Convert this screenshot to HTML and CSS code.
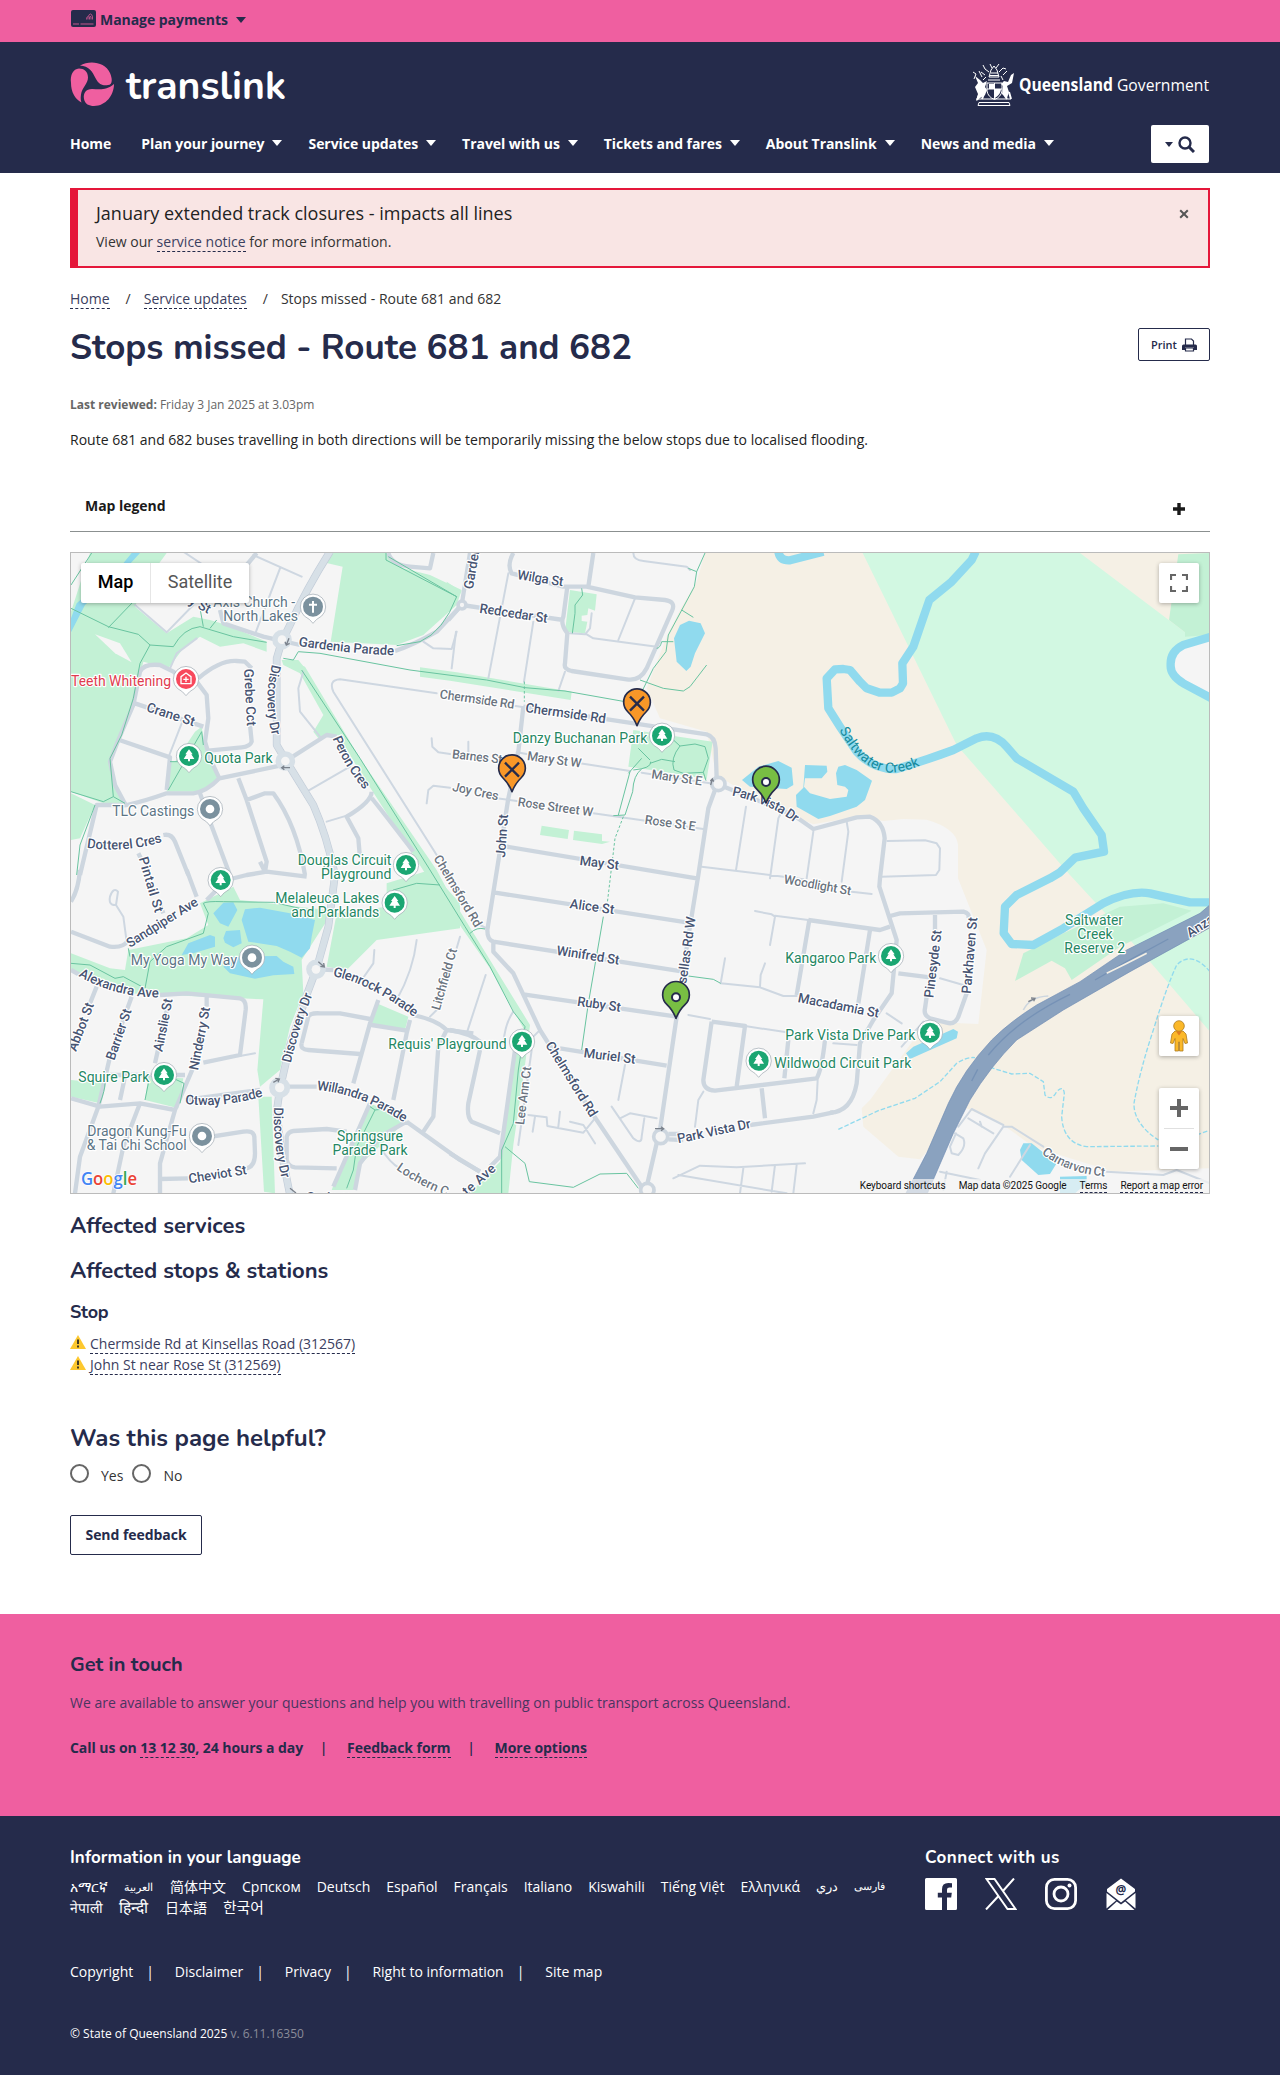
FILE: index.html
```html
<!DOCTYPE html>
<html lang="en">
<head>
<meta charset="utf-8">
<title>Stops missed - Route 681 and 682 | Translink</title>
<link rel="stylesheet" href="styles.css">
</head>
<body>
<div class="topbar">
  <div class="container topbar-inner">
    <svg class="card-icon" viewBox="0 0 25 17"><rect width="25" height="17" rx="2" fill="#252b4b"/><path d="M2 14h6M9.500 14h13" stroke="#ef5fa0" stroke-width=".8"/><path d="M15.500 9.500q0-2 1-3M17 9.500V7q1-3 2.500-3T21.500 7v2.500M18.500 9.500V7q.5-1.500 1.500 0v2.500" fill="none" stroke="#ef5fa0" stroke-width=".7"/></svg>
    <span>Manage payments</span><i class="caret"></i>
  </div>
</div>
<header class="header">
  <div class="container brand">
    <svg class="logo" viewBox="0 0 216 44" role="img" aria-label="translink">
      <g fill="#ef5fa0">
        <path d="M10 3.500C20-2 35 0 40 11c3 7 2 12-2 12-4 1-9 0-12-6C22 9 19 4 10 3.500z"/>
        <path d="M1 21C0 13 3 7 9 6.500c5 0 9 3 9 9 0 6-6 10-7 17-.6 4-.2 6 .5 8C5 37 1 30 1 21z"/>
        <path d="M14 37c-1-6 2-10 8-10 7 0 14 2 22-5C44 33 36 44 24 44c-5 0-9-2-10-7z"/>
      </g>
      <text x="56" y="36.500" textLength="160" lengthAdjust="spacingAndGlyphs">translink</text>
    </svg>
    <svg class="gov" viewBox="0 0 238 44" role="img" aria-label="Queensland Government">
      <g fill="none" stroke="#fff" stroke-width="1">
        <path d="M7 39.500h30l1 3H6zM5 36h34M15 20h15v8q-1 6-7.500 8.500Q16 34 15 28zM15 26h15M22.500 20v16M16 17h12M17 14l2-7 3-4 3 4 2 7z"/>
        <path d="M17 9l-4-3-2-4M27 9l4-4 3 1M13 12l-4-3M31 12l4-4M20 5l-2-4M24 5l3-4M19 10h7M18 12.500h9M2 16l2-5-3-2M10 14l-3-6M11 17l3-3M31 17l-2-4"/>
        <path d="M5 37l3-7M10 36l2-5M35 36l-4-6M39 36l-2-7" stroke-width="2"/>
      </g>
      <path fill="#fff" d="M3 13l5 4 3 3 4-2-2 6 2 3-2 5-5 3-4 3 2-7-3-7 3-4zM42 10l-2 10-5 3 2 6-2 6-5-4 1-8-2-2 3-3 4 1 3-7zM17 21h5v5h-5zM23 26h6q0 5-6 9z"/>
      <text x="47" y="28" textLength="190" lengthAdjust="spacingAndGlyphs"><tspan class="gov-bold">Queensland</tspan> Government</text>
    </svg>
  </div>
  <div class="container navrow">
    <nav class="nav">
      <a>Home</a><a>Plan your journey<i class="caret"></i></a><a>Service updates<i class="caret"></i></a><a>Travel with us<i class="caret"></i></a><a>Tickets and fares<i class="caret"></i></a><a>About Translink<i class="caret"></i></a><a>News and media<i class="caret"></i></a>
    </nav>
    <div class="search"><i class="caret"></i><svg viewBox="0 0 17 17" width="17" height="17"><circle cx="7" cy="7" r="5.500" fill="none" stroke="#252b4b" stroke-width="2.400"/><path d="M11 11l5 5" stroke="#252b4b" stroke-width="3"/></svg></div>
  </div>
</header>
<main class="container">
  <div class="alert">
    <div><div class="alert-title">January extended track closures - impacts all lines</div>
    <div class="alert-text">View our <a class="link">service notice</a> for more information.</div></div>
    <svg class="close" viewBox="0 0 10 10"><path d="M1.200 1.200l7.600 7.600M8.800 1.200l-7.600 7.600" stroke="#555" stroke-width="2"/></svg>
  </div>
  <div class="crumbs"><a class="link">Home</a><span>/</span><a class="link">Service updates</a><span>/</span><em>Stops missed - Route 681 and 682</em></div>
  <div class="titlerow">
    <h1>Stops missed - Route 681 and 682</h1>
    <div class="print">Print <svg viewBox="0 0 15 14" width="15" height="14"><path d="M3.500 7V1h6l2 2v4M3.500 10v3h8v-3z" fill="#fff" stroke="#252b4b" stroke-width="1.200"/><path d="M0 12V8q0-1.500 1.500-1.500h12Q15 6.500 15 8v4h-3V9.500H3V12z" fill="#252b4b"/></svg></div>
  </div>
  <p class="reviewed"><b>Last reviewed:</b> Friday 3 Jan 2025 at 3.03pm</p>
  <p class="intro">Route 681 and 682 buses travelling in both directions will be temporarily missing the below stops due to localised flooding.</p>
  <div class="legend"><span>Map legend</span><svg viewBox="0 0 12 12" width="12" height="12"><path d="M6 0v12M0 6h12" stroke="#1a1a1a" stroke-width="3.400"/></svg></div>

  <div class="map">
  <svg class="map-canvas" viewBox="33 24 3414 1920">
    <defs>
      <g id="drop"><path d="M0 50Q-8 38-26 28A38 38 0 1 1 26 28Q8 38 0 50z" fill="#fff" stroke="#9aa5ad" stroke-width="2"/></g>
      <g id="park"><use href="#drop"/><circle r="30" fill="#1ba672"/><path d="M0-20l11 15H7L16 9H3v7h-6V9h-13L-7-5h-4z" fill="#fff"/></g>
      <g id="dot"><use href="#drop"/><circle r="30" fill="#7b919e"/><circle r="13" fill="#fff"/></g>
      <g id="church"><use href="#drop"/><circle r="30" fill="#7b919e"/><path d="M0-17V18M-12-6H12" stroke="#fff" stroke-width="6"/></g>
      <g id="clinic"><use href="#drop"/><circle r="30" fill="#f8485c"/><path d="M-15 14V-7L0-18 15-7V14zM0-7V9M-8 1H8" stroke="#fff" stroke-width="4" fill="none"/></g>
      <g id="pin"><path d="M0 65Q-10 40-27 24A40 40 0 1 1 27 24Q10 40 0 65z" stroke="#252b4b" stroke-width="5" stroke-linejoin="round"/></g>
      <g id="missed"><use href="#pin" fill="#f89728"/><path d="M-21-22L21 20M21-22L-21 20" stroke="#252b4b" stroke-width="7"/></g>
      <g id="open"><use href="#pin" fill="#78be43"/><circle cy="2" r="12" fill="#fff" stroke="#252b4b" stroke-width="6"/></g>
      <path id="p1" d="M715 303Q860 325 1003 331"/><path id="p2" d="M636 358Q608 460 637 575"/><path id="p3" d="M818 580Q850 660 915 738"/>
      <path id="p4" d="M80 908Q200 925 308 890"/><path id="p5" d="M236 940Q253 1000 286 1108"/><path id="p6" d="M1120 940L1246 1150"/>
      <path id="p7" d="M845 752Q960 775 1035 834"/><path id="p8" d="M28 555Q90 675 180 683Q240 680 295 650"/>
      <path id="p9" d="M210 234Q310 170 420 102"/><path id="p10" d="M55 318Q160 380 300 383"/><path id="p11" d="M375 702Q490 715 612 678"/>
      <path id="p12" d="M692 580Q718 470 759 370"/><path id="p13" d="M642 712Q638 820 665 928"/><path id="p14" d="M818 318Q930 340 1066 444"/>
      <path id="p15" d="M770 660Q900 670 1036 760"/><path id="p16" d="M1008 898Q1080 950 1165 980"/><path id="p17" d="M635 850Q710 912 835 920"/>
    </defs>
    <rect x="33" y="24" width="3414" height="1920" fill="#f5f5f5"/>
    <g class="sand"><path d="M1935 24L1910 110 1860 195 1822 270 1760 430 1800 520 1940 560 1970 690 2100 770 2260 838 2390 815 2470 828 2530 822 2600 824Q2690 850 2694 900V1000L2780 1215 2755 1437 2600 1430 2430 1665 2405 1690 2410 1745 2515 1835 2580 1843 2720 1690 2830 1740 2920 1805 3160 1880 3450 1870V24z"/></g>
    <path class="reserve" d="M2408 24L2690 600 3030 990 3270 1250 3450 1460V262H3375L3060 24z"/>
    <path class="land" d="M3450 280L3370 300 3330 350 3360 410 3450 450z"/>
    <g class="green">
      <path d="M33 200L90 24H320L250 120 225 185 320 265 400 215 450 225 500 240 620 290V320L550 295 480 305 420 275 370 310 325 370 250 350 225 460 185 570 155 640 160 700 195 775H130L33 740z"/>
      <path d="M33 745L105 780 60 880 33 885zM810 24H978L1030 70 1110 90 1205 135 1190 180 1090 270 1010 300 812 290 848 65 790 52zM665 345L715 345 735 370 840 570 775 580 760 560 790 510 720 385 670 360zM405 560L425 545 435 610 475 700 420 740H320L325 650 345 650zM1080 367L1190 382 1535 440 1532 465 1170 407 1080 395z"/>
      <path d="M700 350L735 365 900 640 1130 975 1170 1050 1410 1440 1395 1560 1360 1800 1345 1945H1230L1320 1850 1365 1530 1390 1450 1290 1270 1150 1070 900 680z"/>
      <path d="M3355 28L3448 24V270L3375 275 3375 262 3327 225z"/>
      <g transform="translate(1170)"><path d="M-10 110L35 140-5 190zM360 135L440 148 435 197 415 190 412 210 395 212V228L412 230 405 265 345 260zM550 555L788 590 770 702 640 680 535 665zM275 842L357 855 353 882 270 870zM372 857L456 868V888L480 890 456 897 369 885z"/></g>
      <g transform="translate(0 975)"><path d="M420 100L520 50 540 90 800 120 815 130 725 270 730 370 690 470 660 600 600 650 592 600 610 388 540 385 200 370 33 300V250L150 295 195 300 205 240 380 205 445 165zM980 40L1110 0 1200 100V175L950 210 860 300 800 290 830 130 980 110zM595 680H635L645 970 612 965zM33 630L135 640 120 700 33 680zM265 620L370 625 355 715 255 690zM930 700L1040 750 1000 790 905 880 880 960H815L870 820zM950 400L1045 440 1035 480 935 462z"/></g>
      <path transform="translate(2310 975)" d="M555 333L580 250 700 190 870 110 1000 100 1085 122 870 230 725 330 705 295 665 272z"/>
    </g>
    <path class="land" d="M105 268L180 295 215 352 165 325z"/>
    <g class="water">
      <path d="M33 220L50 175 190 55 215 24H240L205 62 75 180 33 262z"/>
      <path transform="translate(1170)" d="M690 240L717 227 752 235 765 265 735 325 722 365 709 378 680 350 672 280zM876 705L925 665 985 648 1025 668 1030 720 1010 732 900 725zM1065 660L1130 662 1132 680 1115 700H1065L1062 725 1080 745 1140 762 1190 755 1195 735 1185 725 1162 720 1158 685 1165 665 1185 660 1220 675 1266 707 1245 765 1220 785 1140 813 1105 822 1040 785 1038 750 1060 728z"/>
      <path transform="translate(0 975)" d="M460 130L490 98 520 97 532 120 505 170 480 160zM545 150L555 118 600 113 690 130 765 150 755 200 750 235 725 263 690 245 650 228 565 215zM365 255L385 220 450 195 465 200V230L400 250zM490 205L498 183 540 180 545 220 520 232 495 218zM520 260L650 258 670 275 700 290 703 312 640 316 585 326 510 310 490 290z"/>
      <path transform="translate(2310 975)" d="M228 550L250 530 370 477 384 485 380 505 240 567zM570 840L580 820 605 820 680 880 660 912 625 915 575 870zM690 920L770 918V940L735 970H690z"/>
    </g>
    <g class="river">
      <path transform="translate(2310)" d="M437 20L425 45 365 110 298 165 250 305 217 355 219 415 210 430 185 443H150L110 430 90 410 60 375 40 372 15 373-10 400-5 490 30 545 80 620Q130 675 200 672 290 645 370 615L440 580Q490 560 530 605L560 640 730 740 760 790 815 870 822 920 735 938 690 982 660 1000 560 1050 525 1085 521 1165 545 1197 610 1200 700 1150 820 1075Q900 1035 960 1045L1080 1072H1140M1145 275L1060 300Q1020 320 1022 360 1020 390 1060 415L1145 460"/>
      <path transform="translate(1170)" d="M985 20Q990 48 1020 46L1120 20"/>
    </g>
    <g class="stream"><path transform="translate(2310 975)" d="M25 778L145 722 255 685 330 635 380 580Q410 560 435 563M480 592L545 612 600 610 640 635 645 675Q665 695 680 665 700 645 703 670L695 740Q700 820 770 830L985 828M1140 305Q1085 240 1040 285 1010 350 970 480 930 600 912 700 910 760 985 810M1100 795l40-15"/></g>
    <g class="minor">
      <path d="M580 30L725 95M660 70L588 260M225 180L320 262 400 180M330 370L350 325 410 280M1090 290L1120 310 1175 312 1190 260M1130 445L840 403Q805 405 820 440L1130 930M780 575L720 500 715 430 730 380M740 740L870 665M365 535L328 630M800 830L860 812M1115 580L1117 605 1135 622 1170 627M1100 775L1105 735 1120 722 1170 728M370 20l60 40"/>
      <path transform="translate(1170)" d="M175 85L115 400M250 230L222 410M345 380L325 438M555 160L505 285M425 205L420 250 405 268 360 265M410 268L430 280 620 305M550 24Q550 45 580 48L710 65 720 75M200 622L230 627M390 655L540 678M575 683L780 715M140 760L200 768M430 805L760 852M5 370L18 260M55 590V625M888 785L858 975M995 800L985 820 960 1000M1090 860L1070 1000M755 965L880 980 1060 1003M192 482L222 487"/>
      <path transform="translate(2310)" d="M50 830L55 860 35 1010M172 888L285 886 320 895 330 910 328 975 318 990 155 995M65 1040L125 1047"/>
      <path transform="translate(1170 975)" d="M915 123L965 133 975 140 960 225M975 137L1075 150M825 265L812 340 930 352 1000 378H1040M945 280L932 315 930 350M715 435L780 447M885 468L1010 487M760 665L745 690 735 770M1103 630L1100 690 1090 730M485 710L550 805Q575 825 575 800L583 745M510 745L540 730 620 745M670 925L750 887 860 892 1065 880M685 915L1010 970M880 895L870 970M975 885L965 965M1040 885L1030 970M525 585L505 690M235 735L290 742 292 768 400 788 435 745M330 725L325 770M255 740L248 785M360 755l40 10L435 820M245 540L205 825M107 315L50 490M190 425Q165 460 160 520M265 485L250 500M90 165L110 175"/>
      <path transform="translate(0 975)" d="M540 558L585 550M943 240L940 280 905 330M1070 210Q1060 300 1010 390M1200 200L1190 235M1130 420L1110 440M960 830Q990 880 1020 895M165 105Q145 105 150 80 160 50 174 65L168 105 190 140 200 215"/>
      <path transform="translate(2310 975)" d="M375 790L400 805Q410 830 385 855L365 850 360 830 378 790M385 770L425 717 520 765M415 745L490 790M450 755l5 15M330 905L450 930M350 905L340 960M520 770H545L640 830M520 770L465 850 445 895M600 825L540 920M830 905L1000 915 1040 900 1140 940M330 325L400 345M170 430L215 460M280 455L215 530M10 520L80 525"/>
    </g>
    <g class="major">
      <path d="M200 785L165 720 150 650 175 585 220 480 240 380Q250 355 300 360L340 380 365 400M410 410L440 450 445 520 435 590 450 640 478 700Q440 740 400 745H320Q250 770 200 780L110 780 60 990M415 400Q480 345 530 348L555 350 575 370M570 540L575 590Q570 605 545 607L445 617M225 475L430 545M178 585L330 637 320 735M478 700L660 662M690 640L800 570 830 575M480 195L490 235 610 275 720 300M1005 318Q1060 300 1130 260L1205 180M420 745L450 830 510 990M535 700L560 765 620 950 615 980M560 765L615 745H640Q710 840 735 990M935 740Q935 770 860 815L895 880 900 940M935 760Q945 770 1060 920M310 870Q335 865 345 890L385 990M235 925L245 945M560 60L590 24"/>
      <path transform="translate(1170)" d="M190 24Q170 60 185 85L340 125H410L555 157 645 165Q680 170 665 200L590 370Q570 410 530 403L365 378Q340 372 345 355L352 265Q330 235 340 215L352 125M430 24L415 125M35 180L340 225M60 24L35 180-5 225M-185 24Q-175 60-120 65L-60 70-50 24M220 485L770 568Q795 575 797 610L800 700M815 722L1030 810 1090 852 1220 817 1260 815Q1300 830 1304 880L1290 1000 1288 1025 1340 1185 1325 1345 1270 1425 1230 1495 1220 1615Q1205 1700 1140 1703M795 735L775 790 745 990 715 1175 680 1415 630 1755M220 485L205 620 175 760 112 1155Q112 1185 130 1190V1220L190 1285 270 1455 430 1710 585 1940M170 905L740 1000M135 1043L710 1132M130 1190L700 1280M220 1348L680 1415M330 1510L650 1562"/>
      <path transform="translate(1170 975)" d="M1075 150L1290 180 1320 170M1078 150L1040 375M785 455L760 630Q760 660 795 662L1100 625Q1115 600 1125 510M785 455L885 468 860 650M1015 510L1003 625M935 655L945 745M655 792H690M655 808L700 810M900 765L1090 740 1150 727M620 820L590 950M0 480Q60 490 90 515M90 540L55 700Q50 740 65 755L150 790M195 540L160 790 150 860 120 890M0 850L90 905"/>
      <path transform="translate(0 975)" d="M33 300L60 315M300 375L380 370 540 385Q560 390 557 420L540 555 430 578M440 375V410M405 580L375 650 345 720 300 880V970M110 350L90 400M215 380L150 560 115 710 60 860 45 970M325 400L285 580M150 615L375 615M195 620L180 690M33 685L120 710 240 700 345 720M240 700L190 830 160 970M300 927L385 925M560 895Q585 890 585 850L583 800Q580 780 550 785L390 810M600 660L375 690M770 298L820 300M1060 435Q1130 450 1160 480L1240 490M955 390L930 460 880 640M725 520L745 440Q750 428 780 430H840L930 447M725 520Q720 538 745 540L900 552M935 465L1040 482M1050 450L1040 490 1000 690M650 650H770M1040 755L1200 870 1260 905M1160 480L1135 530 1120 740 1090 785M930 700L820 950M1040 755L960 800 900 880 885 960M680 870V800Q685 785 700 783L800 777 860 785M680 870Q685 890 705 892L830 895M33 185L150 230Q190 235 205 210M380 0L410 80M440 90L500 30 560 15 620 5 740 20M615 5l-15-30M60 0Q55 60 33 95M295 90L310 130"/>
      <path transform="translate(2310 975)" d="M180 138L210 130 400 125Q420 130 415 145M315 135V180M410 370L385 440Q375 465 350 458L300 445Q280 435 285 415L290 380M205 310L300 322M120 180L85 400"/>
    </g>
    <g class="arterial-edge"><path d="M810 20Q740 130 690 240L665 290 650 340 650 600 680 650 760 780Q800 870 825 990L805 1145 770 1270 740 1350 690 1500 660 1630 650 1700 665 1825 690 1950"/></g>
    <g class="arterial"><path d="M810 20Q740 130 690 240L665 290 650 340 650 600 680 650 760 780Q800 870 825 990L805 1145 770 1270 740 1350 690 1500 660 1630 650 1700 665 1825 690 1950"/><circle cx="666" cy="284" r="20"/><circle cx="676" cy="648" r="20"/><circle cx="768" cy="1273" r="20"/><circle cx="659" cy="1628" r="22"/></g>
    <g fill="#f5f5f5"><circle cx="666" cy="284" r="13"/><circle cx="676" cy="648" r="13"/><circle cx="768" cy="1273" r="13"/><circle cx="659" cy="1628" r="14"/></g>
    <g class="ring"><circle cx="1975" cy="717" r="20"/><circle cx="1802" cy="1775" r="21"/><circle cx="1206" cy="180" r="12"/><circle cx="1762" cy="1935" r="20"/></g>
    <g class="path">
      <path d="M33 190L145 245 235 268 270 300 340 305Q370 250 420 245L520 275 620 292M270 300L240 355 220 460 185 570 150 640 160 755 130 770 33 740M145 248L220 170M33 120L95 24M670 340L700 345 715 320 780 325 1050 375 1280 405 1395 428 1515 438 1695 470M725 375L900 640 1110 975 1215 1145 1290 1265 1360 1400 1395 1445 1375 1575 1360 1735 1325 1815V1945M325 735L425 560 430 600M978 24V45L1190 155Q1150 260 1080 290L1010 302M985 35L1190 155M160 755L195 775M105 780L60 900 50 990M420 190l10 55M470 225l-20 25M330 650h50M1335 1805L1395 1855 1408 1910 1540 1927 1620 1887 1700 1885 1735 1930M1630 1115L1585 1375 1565 1515M1885 1293L1960 1303 1982 1315M1230 1165Q1250 1145 1275 1152"/>
      <path transform="translate(1170)" d="M765 24L740 80 733 125 655 270 648 320 610 370 578 435M570 405L640 430 700 438 720 425 770 360M695 195l35 22M635 290h35M715 70l25 10M620 310q10 0 15-20M395 130L398 150 375 180V205L367 265M540 680L505 810M535 685L575 640 M600 645L565 610M550 675Q605 670 602 650M600 655L635 643 675 650M690 603Q660 640 672 675L700 685 760 682 775 640 765 605 735 597 690 603 665 580M575 672Q550 690 548 740L525 810 490 812M760 682l8 25"/>
      <path transform="translate(0 975)" d="M33 280L90 285 165 325 190 320 255 355 270 275 320 230 430 190 445 130 430 100Q440 93 490 95L640 97 740 120M205 235l5 25M120 700Q135 660 135 640M255 690L265 640M360 700L372 640 340 625M930 710L945 720 890 830 880 900 860 955M945 720L990 715M980 80L1000 60 1070 40 1140 45"/>
      <path class="dash" d="M1393 410V470M1690 815L1665 880 1640 1090"/>
    </g>
    <g transform="translate(2310 975)"><path fill="#8aa2bf" stroke="#6f8db4" stroke-width="2" d="M225 975L290 850 355 700Q400 600 485 510 540 455 620 405L750 335 890 240 1110 130 1145 100V170L900 305 700 420 560 510Q480 590 420 690L370 790 290 975z"/><path d="M475 555Q560 450 720 373M795 330L890 275 1015 207M425 633l18-35" fill="none" stroke="#7692b6" stroke-width="4"/><path d="M830 310l55-27 65-33" stroke="#f5f0e5" stroke-width="5" fill="none"/><path d="M580 420Q600 380 655 378" fill="none" stroke="#cdd6df" stroke-width="5"/></g>
    <g class="arrow"><path d="M687 280l-8 20m-4-10l4 10 10-5M690 668h-25m8-6l-8 6 8 6M775 1250l18 16m-2-12l2 12-12-2M640 1612l18-10m-12-2l12 2-4 10M1785 1751h26m-8-6l8 6-8 6M1952 720l5-18m-6 6l6-6 4 8M2905 1370l20-10m-12-1l12 1-4 9M690 1930l18 14"/></g>

    <g class="lbl street">
      <text><textPath href="#p1" textLength="288">Gardenia Parade</textPath></text>
      <text transform="translate(257 498) rotate(18)" textLength="150">Crane St</text>
      <text transform="translate(552 372) rotate(87)" textLength="172">Grebe Cct</text>
      <text><textPath href="#p2" textLength="216">Discovery Dr</textPath></text>
      <text><textPath href="#p3" textLength="182">Peron Cres</textPath></text>
      <text><textPath href="#p4" textLength="230">Dotterel Cres</textPath></text>
      <text><textPath href="#p5" textLength="172">Pintail St</textPath></text>
      <text transform="translate(372 168) rotate(28)">ry St</text>
      <g transform="translate(1170)">
        <text transform="translate(68 134) rotate(-80)">Garden</text>
        <text transform="translate(200 102) rotate(9)" textLength="140">Wilga St</text>
        <text transform="translate(87 203) rotate(8.500)" textLength="206">Redcedar St</text>
        <text transform="translate(225 501) rotate(8)" textLength="243">Chermside Rd</text>
        <text transform="translate(165 938) rotate(-86)" textLength="130">John St</text>
        <text transform="translate(388 960) rotate(7)" textLength="118">May St</text>
        <text><textPath href="#p7" textLength="208">Park Vista Dr</textPath></text>
      </g>
      <g transform="translate(0 975)">
        <text><textPath href="#p9" textLength="245">Sandpiper Ave</textPath></text>
        <text><textPath href="#p10" textLength="252">Alexandra Ave</textPath></text>
        <text transform="translate(48 546) rotate(-69)" textLength="152">Abbot St</text>
        <text transform="translate(163 573) rotate(-71)" textLength="160">Barrier St</text>
        <text transform="translate(307 547) rotate(-79)" textLength="162">Ainslie St</text>
        <text transform="translate(414 602) rotate(-79)" textLength="192">Ninderry St</text>
        <text><textPath href="#p11" textLength="237">Otway Parade</textPath></text>
        <text><textPath href="#p12" textLength="216">Discovery Dr</textPath></text>
        <text><textPath href="#p13" textLength="216">Discovery Dr</textPath></text>
        <text transform="translate(388 940) rotate(-9)" textLength="176">Cheviot St</text>
        <text><textPath href="#p14" textLength="276">Glenrock Parade</textPath></text>
        <text><textPath href="#p15" textLength="282">Willandra Parade</textPath></text>
        <text x="740" y="992">Springs</text>
      </g>
      <g transform="translate(1170 975)">
        <text transform="translate(358 114) rotate(8)" textLength="134">Alice St</text>
        <text transform="translate(318 254) rotate(9)" textLength="190">Winifred St</text>
        <text transform="translate(380 407) rotate(8)" textLength="132">Ruby St</text>
        <text transform="translate(400 562) rotate(7)" textLength="156">Muriel St</text>
        <text transform="translate(709 342) rotate(-82)" textLength="202">sellas Rd W</text>
        <text transform="translate(285 525) rotate(58)" textLength="258">Chelmsford Rd</text>
        <text transform="translate(685 820) rotate(-12)" textLength="224">Park Vista Dr</text>
        <text transform="translate(52 978) rotate(-42)" textLength="118">te Ave</text>
        <text transform="translate(1042 396) rotate(11)" textLength="247">Macadamia St</text>
      </g>
      <g transform="translate(2310 975)">
        <text transform="translate(310 385) rotate(-83)" textLength="205">Pinesyde St</text>
        <text transform="translate(422 372) rotate(-85)" textLength="230">Parkhaven St</text>
        <text transform="translate(1080 203) rotate(-32)">Anzac</text>
      </g>
    </g>
    <g class="lbl lane">
      <text><textPath href="#p6" textLength="244">Chelmsford Rd</textPath></text>
      <text transform="translate(1138 460) rotate(8)" textLength="226">Chermside Rd</text>
      <g transform="translate(1170)">
        <text transform="translate(5 640) rotate(6)" textLength="152">Barnes St</text>
        <text transform="translate(230 645) rotate(8)" textLength="164">Mary St W</text>
        <text transform="translate(603 700) rotate(8)" textLength="153">Mary St E</text>
        <text transform="translate(5 737) rotate(12)" textLength="141">Joy Cres</text>
        <text transform="translate(202 783) rotate(8)" textLength="228">Rose Street W</text>
        <text transform="translate(583 836) rotate(8)" textLength="154">Rose St E</text>
      </g>
      <g transform="translate(1170 975)">
        <text transform="translate(222 766) rotate(-83)" textLength="176">Lee Ann Ct</text>
        <text transform="translate(1000 40) rotate(10)" textLength="204">Woodlight St</text>
        <text transform="translate(-31 422) rotate(-74)" textLength="190">Litchfield Ct</text>
      </g>
      <text transform="translate(0 975)"><textPath href="#p16">Lochern Ct</textPath></text>
      <text transform="translate(2310 975)"><textPath href="#p17" textLength="205">Carnarvon Ct</textPath></text>
    </g>
    <text class="creek" transform="translate(2310)"><textPath href="#p8" textLength="300">Saltwater Creek</textPath></text>
    <g class="lbl place">
      <text x="433" y="654" textLength="205">Quota Park</text>
      <text x="994" y="960" text-anchor="end" textLength="281">Douglas Circuit</text>
      <text x="994" y="1002" text-anchor="end" textLength="211">Playground</text>
      <text x="1358" y="594" textLength="404">Danzy Buchanan Park</text>
      <text x="958" y="1074" text-anchor="end" textLength="312">Melaleuca Lakes</text>
      <text x="958" y="1116" text-anchor="end" textLength="264">and Parklands</text>
      <text x="55" y="1611" textLength="213">Squire Park</text>
      <text x="930" y="1788" text-anchor="middle" textLength="198">Springsure</text>
      <text x="930" y="1830" text-anchor="middle" textLength="225">Parade Park</text>
      <text x="1340" y="1513" text-anchor="end" textLength="355">Requis' Playground</text>
      <text x="2176" y="1254" textLength="273">Kangaroo Park</text>
      <text x="2176" y="1485" textLength="390">Park Vista Drive Park</text>
      <text x="2143" y="1569" textLength="411">Wildwood Circuit Park</text>
      <text x="3102" y="1140" text-anchor="middle" textLength="174">Saltwater</text>
      <text x="3105" y="1182" text-anchor="middle" textLength="106">Creek</text>
      <text x="3104" y="1224" text-anchor="middle" textLength="182">Reserve 2</text>
    </g>
    <g class="lbl business">
      <text x="460" y="187" textLength="245">Axis Church -</text>
      <text x="490" y="228" textLength="224">North Lakes</text>
      <text x="157" y="813" textLength="246">TLC Castings</text>
      <text x="212" y="1260" textLength="319">My Yoga My Way</text>
      <text x="380" y="1773" text-anchor="end" textLength="298">Dragon Kung-Fu</text>
      <text x="380" y="1815" text-anchor="end" textLength="300">&amp; Tai Chi School</text>
      <text class="health" x="33" y="423" textLength="300">Teeth Whitening</text>
    </g>
    <use href="#park" x="387" y="633"/><use href="#church" x="759" y="185"/><use href="#clinic" x="378" y="402"/><use href="#dot" x="450" y="792"/>
    <use href="#park" x="1038" y="960"/><use href="#park" x="1806" y="572"/><use href="#park" x="482" y="1005"/><use href="#park" x="1004" y="1073"/>
    <use href="#dot" x="576" y="1238"/><use href="#park" x="312" y="1590"/><use href="#dot" x="426" y="1773"/><use href="#park" x="1386" y="1490"/>
    <use href="#park" x="2096" y="1547"/><use href="#park" x="2493" y="1233"/><use href="#park" x="2610" y="1463"/>
    <use href="#missed" x="1731" y="477"/><use href="#missed" x="1356" y="675"/><use href="#open" x="2118" y="709"/><use href="#open" x="1848" y="1355"/>
    <text class="google" x="63" y="1920" textLength="168" lengthAdjust="spacingAndGlyphs"><tspan fill="#4285f4">G</tspan><tspan fill="#ea4335">o</tspan><tspan fill="#fbbc04">o</tspan><tspan fill="#4285f4">g</tspan><tspan fill="#34a853">l</tspan><tspan fill="#ea4335">e</tspan></text>
  </svg>
    <div class="ctl types"><b>Map</b><span>Satellite</span></div>
    <div class="ctl full"><svg viewBox="0 0 18 18" width="18" height="18"><path d="M1 6V1h5M12 1h5v5M17 12v5h-5M6 17H1v-5" fill="none" stroke="#666" stroke-width="2.200"/></svg></div>
    <div class="ctl peg"><svg viewBox="0 0 18 32" width="18" height="32"><path d="M5 11h8l3 3 1.500 9-2.500.5-2-5V31H9.500v-9h-1v9H5V18.500l-2 5-2.500-.5L2 14z" fill="#fbb829" stroke="#ad7b1f" stroke-width=".8"/><circle cx="9" cy="6" r="5.300" fill="#fbb829" stroke="#ad7b1f" stroke-width=".8"/><path d="M6 11.500h6l-3 4z" fill="#e07b1f"/></svg></div>
    <div class="ctl zoom"><svg viewBox="0 0 18 18" width="18" height="18"><path d="M9 0v18M0 9h18" stroke="#666" stroke-width="4"/></svg><i></i><svg viewBox="0 0 18 18" width="18" height="18"><path d="M0 9h18" stroke="#666" stroke-width="4"/></svg></div>
    <div class="credits"><span>Keyboard shortcuts</span><span>Map data ©2025 Google</span><a>Terms</a><a>Report a map error</a></div>
  </div>

  <h2>Affected services</h2>
  <h2 class="second">Affected stops &amp; stations</h2>
  <h3>Stop</h3>
  <ul class="stops">
    <li><svg viewBox="0 0 16 14"><path d="M8 0l8 14H0z" fill="#fdc82f"/><path d="M8 4.500v4.500M8 10.500v2" stroke="#222" stroke-width="1.700"/></svg><a class="link">Chermside Rd at Kinsellas Road (312567)</a></li>
    <li><svg viewBox="0 0 16 14"><path d="M8 0l8 14H0z" fill="#fdc82f"/><path d="M8 4.500v4.500M8 10.500v2" stroke="#222" stroke-width="1.700"/></svg><a class="link">John St near Rose St (312569)</a></li>
  </ul>
  <h2 class="helpful">Was this page helpful?</h2>
  <div class="radios"><i></i><span>Yes</span><i></i><span>No</span></div>
  <div class="send">Send feedback</div>
</main>
<section class="touch">
  <div class="container">
    <h4>Get in touch</h4>
    <p>We are available to answer your questions and help you with travelling on public transport across Queensland.</p>
    <div class="contact"><span>Call us on <a class="link">13 12 30</a>, 24 hours a day</span><em>|</em><a class="link">Feedback form</a><em>|</em><a class="link">More options</a></div>
  </div>
</section>
<footer class="footer">
  <div class="container">
    <div class="cols">
      <div class="langs-col">
        <h5 class="info">Information in your language</h5>
        <div class="langs"><span class="am">አማርኛ</span><span class="ar">العربية</span><span class="zh">简体中文</span><span>Српском</span><span>Deutsch</span><span>Español</span><span>Français</span><span>Italiano</span><span>Kiswahili</span><span>Tiếng Việt</span><span>Ελληνικά</span><span class="dr">دري</span><span class="fa">فارسی</span></div>
        <div class="langs"><span class="ne">नेपाली</span><span class="hi">हिन्दी</span><span class="ja">日本語</span><span class="ko">한국어</span></div>
      </div>
      <div>
        <h5 class="connect">Connect with us</h5>
        <div class="social">
          <svg viewBox="0 0 32 32"><path fill="#fff" fill-rule="evenodd" d="M1.500 0h29Q32 0 32 1.500v29Q32 32 30.500 32H22V19.600h4.200l.6-4.800H22v-3q0-2.400 2.400-2.400H27V5.200Q25.500 5 23.300 5 17 5 17 11.300v3.500h-4.200v4.800H17V32H1.500Q0 32 0 30.500v-29Q0 0 1.500 0z"/></svg>
          <svg viewBox="0 0 32 32"><path d="M1.500 1h8l21 30h-8zM29 .5L17.500 13.500M13.500 18L1 31.500" fill="none" stroke="#fff" stroke-width="2"/></svg>
          <svg viewBox="0 0 32 32"><g fill="none" stroke="#fff" stroke-width="2.800"><rect x="1.400" y="1.400" width="29.200" height="29.200" rx="8"/><circle cx="16" cy="16" r="7"/></g><circle cx="24.500" cy="7.500" r="2" fill="#fff"/></svg>
          <svg viewBox="0 0 32 32"><path fill="#fff" d="M2 11L16 .5 30 11V13.500L16 24.500 2 13.500zM1.500 15v15.500l9.500-8zM30.500 15v15.500l-9.500-8zM2.500 32h27l-9.300-8.500-4.200 3-4.200-3z"/><text x="16" y="16" text-anchor="middle" class="at">@</text></svg>
        </div>
      </div>
    </div>
    <div class="flinks"><a>Copyright</a><em>|</em><a>Disclaimer</a><em>|</em><a>Privacy</a><em>|</em><a>Right to information</a><em>|</em><a>Site map</a></div>
    <div class="copy">© State of Queensland 2025 <span>v. 6.11.16350</span></div>
  </div>
</footer>
</body>
</html>
```
FILE: styles.css
```css
* { box-sizing: border-box; }
body { margin: 0; background: #fff; color: #333; font: 14px/21px "Open Sans", "Noto Sans CJK SC", sans-serif; }
h1, h2, h3, h4, h5, p, ul { margin: 0; padding: 0; }
em { font-style: normal; }
.container { width: 1140px; margin: 0 auto; }
.caret { display: inline-block; border: 5px solid transparent; border-top: 6px solid; border-bottom: 0; margin-left: 8px; flex: none; }
.link { color: #3b4060; border-bottom: 1px dashed #252b4b; }

.topbar { height: 42px; background: #ef5fa0; color: #252b4b; font-weight: 700; letter-spacing: -.05px; }
.topbar-inner { display: flex; align-items: center; height: 39px; padding-left: 1px; }
.card-icon { width: 25px; height: 17px; margin: -2px 4px 0 0; }

.header { height: 131px; background: #252b4b; color: #fff; }
.brand { display: flex; justify-content: space-between; padding-top: 20px; }
.logo { width: 216px; height: 44px; }
.logo text { font: 700 40px Nunito, Lato, sans-serif; fill: #fff; }
.gov { width: 238px; height: 44px; margin-top: 1px; }
.gov text { font: 400 17px "Open Sans", sans-serif; fill: #fff; }
.gov .gov-bold { font-weight: 700; }
.navrow { display: flex; justify-content: space-between; padding-top: 18px; }
.nav { display: flex; gap: 26px; align-items: center; height: 36px; font-weight: 700; letter-spacing: -.05px; }
.nav a { display: flex; align-items: center; white-space: nowrap; }
.nav a:first-child { margin-right: 4px; }
.search { width: 58px; height: 38px; background: #fff; border-radius: 2px; color: #252b4b; display: flex; align-items: center; justify-content: center; gap: 5px; margin-right: 1px; }
.search .caret { margin: 0; border-width: 5px 4px 0; }

.alert { margin-top: 15px; height: 80px; border: 2px solid #e5173a; border-left-width: 8px; background: #f9e5e4; padding: 11px 19px 0 18px; display: flex; justify-content: space-between; }
.alert-title { font-size: 18px; line-height: 25px; color: #222; }
.alert-text { margin-top: 5px; color: #333; }
.close { width: 10px; height: 10px; margin-top: 8px; }
.crumbs { margin-top: 20px; display: flex; color: #333; height: 21px; }
.crumbs span { margin: 0 13px 0 16px; }
.crumbs a { height: 21px; }
.titlerow { display: flex; justify-content: space-between; margin-top: 19px; height: 76px; }
h1, h2, h3, h4, h5 { font-family: Nunito, "Open Sans", sans-serif; color: #252b4b; font-weight: 700; white-space: nowrap; }
h1 { font-size: 35px; line-height: 40px; }
.print { width: 72px; height: 33px; border: 1px solid #252b4b; border-radius: 2px; display: flex; align-items: center; justify-content: center; gap: 5px; font-size: 11px; font-weight: 600; color: #252b4b; }
.reviewed { font-size: 12px; line-height: 18px; margin-top: -8px; color: #666; }
.intro { margin-top: 15px; color: #222; }
.legend { margin-top: 45px; height: 37px; padding: 0 25px 0 15px; display: flex; justify-content: space-between; border-bottom: 1px solid #8b9090; font-weight: 700; letter-spacing: -.05px; color: #1a1a1a; }
.legend svg { margin-top: 8px; }

.map { position: relative; margin-top: 20px; height: 642px; border: 1px solid #bbb; overflow: hidden; font-family: Roboto, sans-serif; }
.map-canvas { display: block; width: 1138px; height: 640px; }
.sand { fill: #f5f0e5; } .reserve { fill: #d2f8e2; } .land { fill: #f5f5f5; } .green { fill: #c3f1d5; } .water { fill: #90daee; }
.river { fill: none; stroke: #90daee; stroke-width: 25; stroke-linejoin: round; }
.stream { fill: none; stroke: #90daee; stroke-width: 4; stroke-dasharray: 14 6; }
.minor { fill: none; stroke: #ced7e1; stroke-width: 6; stroke-linejoin: round; stroke-linecap: round; }
.major { fill: none; stroke: #cdd6df; stroke-width: 13; stroke-linejoin: round; }
.arterial-edge { fill: none; stroke: #c3cdd9; stroke-width: 23; stroke-linejoin: round; }
.arterial { fill: #d7e0e7; stroke: #d7e0e7; stroke-width: 19; stroke-linejoin: round; }
.arterial path { fill: none; }
.ring { fill: #f5f5f5; stroke: #cdd6df; stroke-width: 11; }
.path { fill: none; stroke: #69c4a0; stroke-width: 3; }
.path .dash { stroke-dasharray: 8 6; }
.arrow { fill: none; stroke: #7b828c; stroke-width: 4; }
.lbl { stroke: #fff; stroke-width: 7px; stroke-linejoin: round; paint-order: stroke; font-family: Roboto, sans-serif; }
.street { font-size: 40px; font-weight: 500; fill: #475472; }
.lane { font-size: 38px; fill: #6b7480; font-weight: 500; }
.place { font-size: 42px; fill: #258763; }
.business { font-size: 42px; fill: #5c7585; }
.health { fill: #df3c4f; }
.creek { font: 42px Roboto, sans-serif; fill: #168a9d; }
.google { font: 600 54px "Open Sans", sans-serif; stroke: #fff; stroke-width: 4px; paint-order: stroke; }
.ctl { position: absolute; background: #fff; border-radius: 2px; box-shadow: 0 1px 4px rgba(0, 0, 0, .3); display: flex; align-items: center; justify-content: center; }
.types { left: 10px; top: 10px; width: 168px; height: 40px; font-size: 18px; justify-content: flex-start; }
.types b { font-weight: 500; width: 70px; text-align: center; color: #000; line-height: 38px; height: 40px; border-right: 1px solid #e6e6e6; }
.types span { flex: 1; text-align: center; color: #565656; line-height: 38px; height: 40px; }
.full { right: 10px; top: 10px; width: 40px; height: 40px; }
.peg { right: 10px; top: 463px; width: 40px; height: 40px; }
.zoom { right: 10px; top: 535px; width: 40px; height: 81px; flex-direction: column; gap: 11px; }
.zoom i { width: 30px; height: 1px; background: #e0e0e0; }
.credits { position: absolute; right: 0; bottom: 0; height: 14px; padding: 0 6px; display: flex; gap: 13px; background: rgba(245, 245, 245, .7); color: #111; font-size: 10px; line-height: 14px; white-space: nowrap; letter-spacing: -.05px; }
.credits a { border-bottom: 1px dashed #252b4b; }

h2 { font-size: 22px; line-height: 30px; margin-top: 17px; }
h2.second { margin-top: 15px; }
h3 { font-size: 18px; line-height: 24px; margin-top: 14px; letter-spacing: -.2px; }
.stops { list-style: none; margin-top: 9px; }
.stops li { display: flex; height: 21px; align-items: center; }
.stops svg { width: 16px; height: 14px; margin: -3px 4px 0 0; }
.stops a { line-height: 19px; }
h2.helpful { font-size: 24px; line-height: 32px; margin-top: 47px; }
.radios { display: flex; align-items: center; margin-top: 9px; height: 22px; }
.radios i { width: 19px; height: 19px; border: 2px solid #666; border-radius: 50%; margin-right: 12px; margin-top: -2px; }
.radios span { margin-right: 10px; line-height: 24px; margin-top: 4px; }
.radios span + i { margin-left: -1px; }
.send { width: 132px; height: 40px; margin-top: 30px; border: 1px solid #252b4b; border-radius: 2px; color: #252b4b; font-weight: 700; letter-spacing: -.05px; text-align: center; line-height: 38px; }

.touch { margin-top: 59px; height: 202px; background: #ef5fa0; color: #252b4b; padding-top: 37px; }
h4 { font-size: 20px; line-height: 28px; }
.touch p { margin-top: 13px; color: #4a3560; }
.touch .link { color: #252b4b; }
.contact { display: flex; margin-top: 24px; font-weight: 700; height: 20px; letter-spacing: -.05px; }
.contact em { width: 44px; padding-right: 3px; text-align: center; font-weight: 600; }
.contact > .link { height: 21px; }
.footer { height: 259px; background: #252b4b; color: #fff; padding-top: 30px; }
.cols { display: flex; height: 115px; }
.langs-col { width: 855px; }
h5 { color: #fff; font-size: 17px; line-height: 24px; font-weight: 700; letter-spacing: .07px; }
.connect { letter-spacing: .5px; }
.langs { display: flex; gap: 16px; height: 21px; white-space: nowrap; }
.langs-col .info { margin-bottom: 6px; }
.ar { font-size: 11px; width: 30px; }
.dr { font-size: 12.5px; }
.fa { font-size: 10.5px; }
.hi { font-size: 15.5px; }
.ja { margin-left: 1px; }
.ko { font-size: 14.800px; }
.social { display: flex; gap: 28px; margin-top: 8px; }
.social svg { width: 32px; height: 32px; }
.at { font: 700 12px "Open Sans", sans-serif; fill: #252b4b; }
.flinks { display: flex; height: 20px; }
.flinks em { width: 41.5px; padding-left: 13px; }
.copy { margin-top: 44px; font-size: 12px; line-height: 18px; }
.copy span { color: #8a8c99; }
```
